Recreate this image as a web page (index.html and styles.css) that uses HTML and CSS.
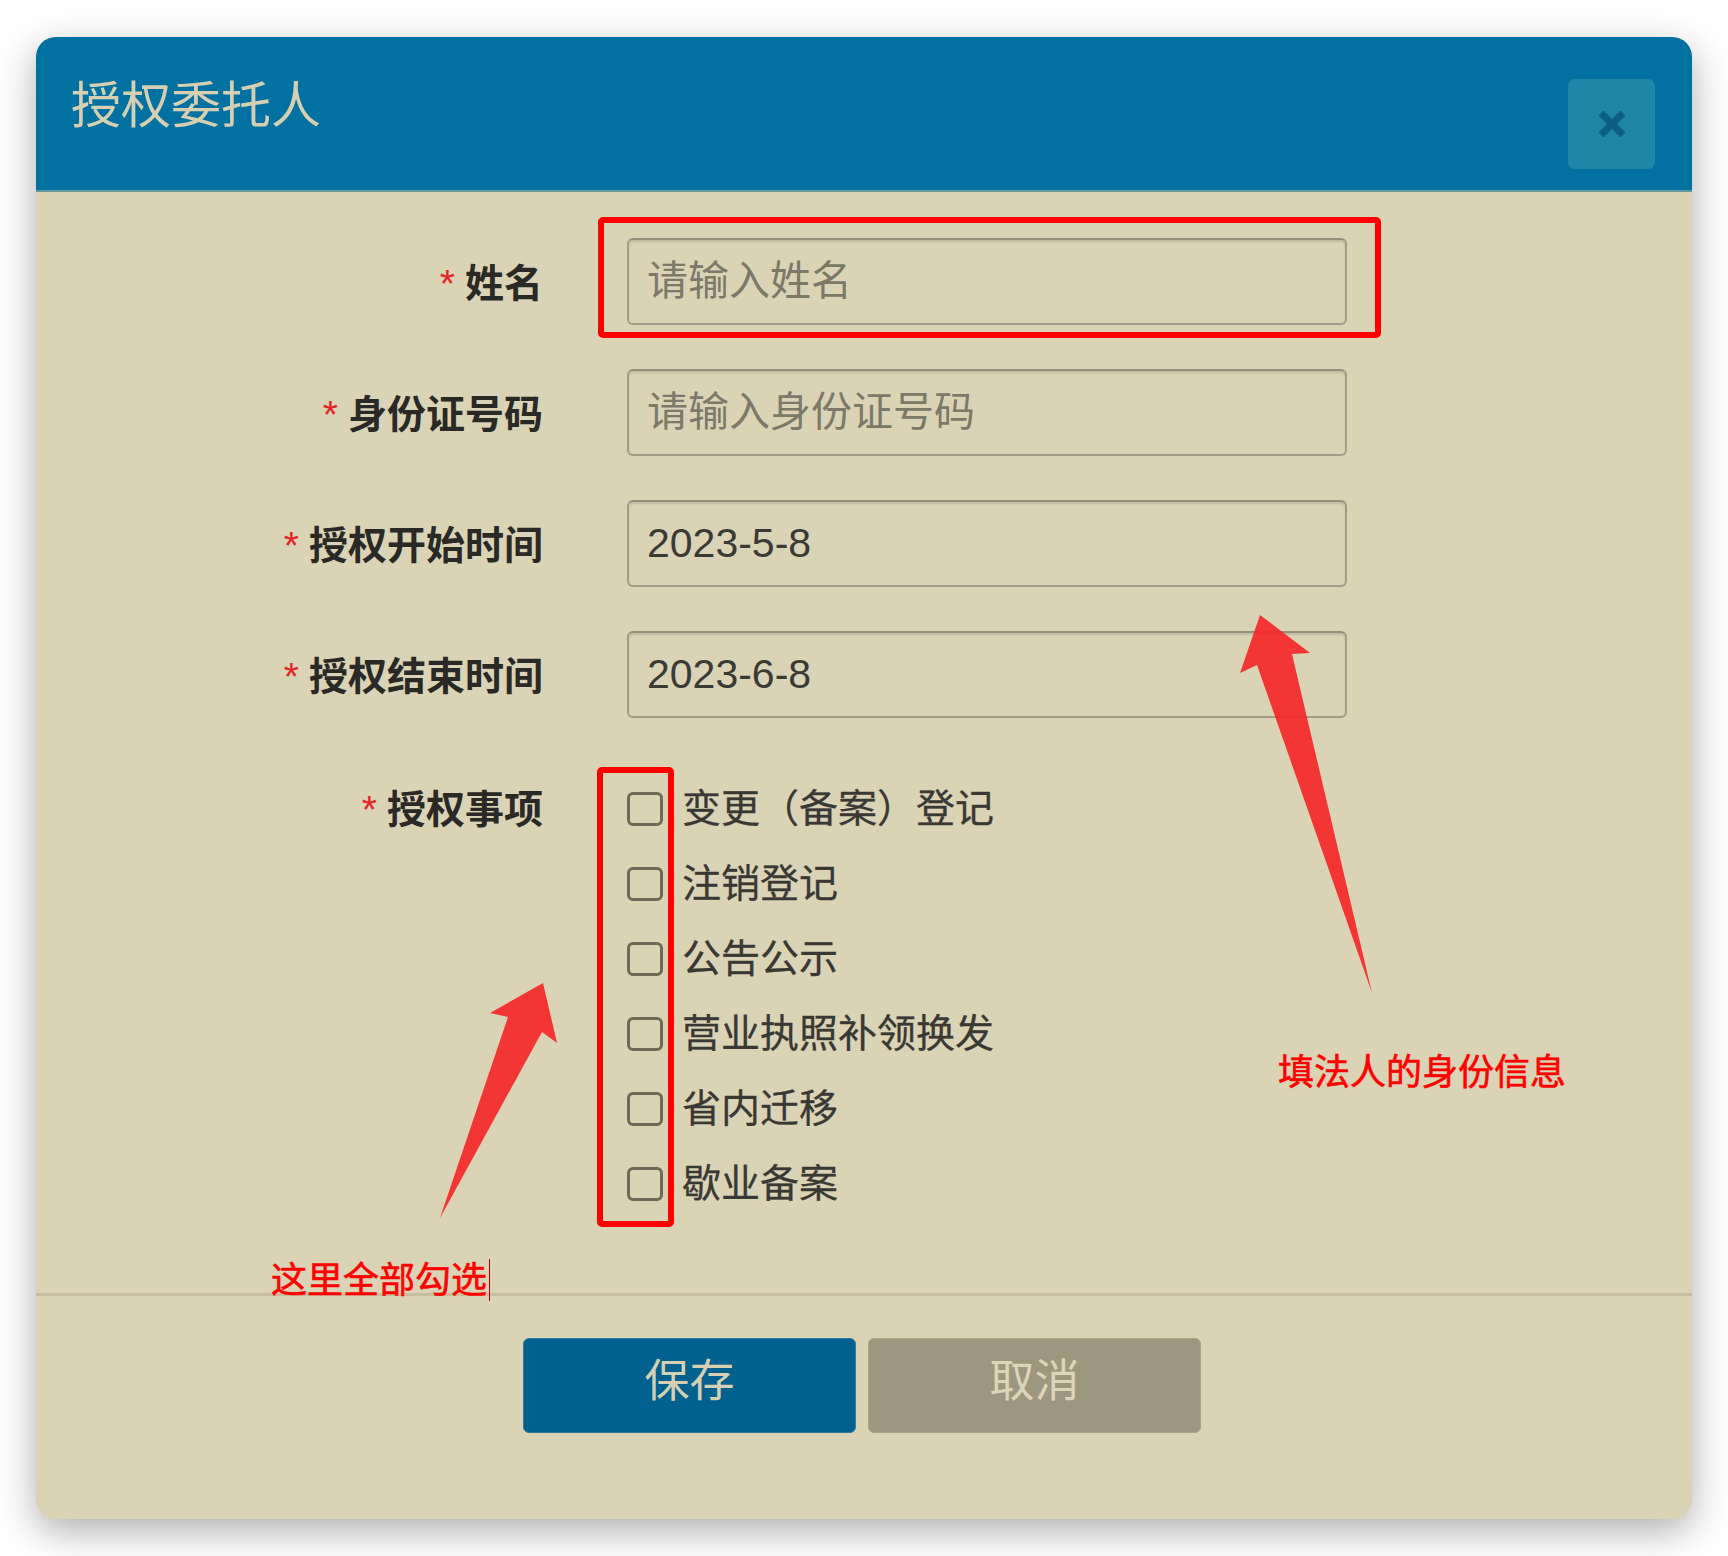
FILE: index.html
```html
<!DOCTYPE html>
<html lang="zh-CN">
<head>
<meta charset="utf-8">
<title>授权委托人</title>
<link rel="stylesheet" href="styles.css">
</head>
<body>
<div class="page">
  <div class="dialog">
    <div class="dialog-header">
      <h1 class="dialog-title">授权委托人</h1>
      <button class="close-btn" type="button" aria-label="关闭">
        <svg width="30" height="30" viewBox="0 0 30 30"><path d="M4 4 L26 26 M26 4 L4 26" stroke="#0b5d86" stroke-width="7" fill="none"/></svg>
      </button>
    </div>
    <form class="dialog-body">
      <div class="form-grid">
        <label class="field-label"><span class="req">*</span>姓名</label>
        <input class="field-input" type="text" placeholder="请输入姓名">

        <label class="field-label"><span class="req">*</span>身份证号码</label>
        <input class="field-input" type="text" placeholder="请输入身份证号码">

        <label class="field-label"><span class="req">*</span>授权开始时间</label>
        <input class="field-input" type="text" value="2023-5-8">

        <label class="field-label"><span class="req">*</span>授权结束时间</label>
        <input class="field-input" type="text" value="2023-6-8">

        <div class="field-label label-top"><span class="req">*</span>授权事项</div>
        <div class="check-list">
          <label class="check-item"><input class="check-box" type="checkbox"><span class="check-text">变更（备案）登记</span></label>
          <label class="check-item"><input class="check-box" type="checkbox"><span class="check-text">注销登记</span></label>
          <label class="check-item"><input class="check-box" type="checkbox"><span class="check-text">公告公示</span></label>
          <label class="check-item"><input class="check-box" type="checkbox"><span class="check-text">营业执照补领换发</span></label>
          <label class="check-item"><input class="check-box" type="checkbox"><span class="check-text">省内迁移</span></label>
          <label class="check-item"><input class="check-box" type="checkbox"><span class="check-text">歇业备案</span></label>
        </div>
      </div>
    </form>
    <div class="dialog-footer">
      <button class="btn btn-primary" type="button">保存</button>
      <button class="btn btn-cancel" type="button">取消</button>
    </div>
  </div>
</div>

<svg class="annot-layer" width="1728" height="1556" viewBox="0 0 1728 1556">
  <rect x="601" y="220" width="777" height="115" rx="2" fill="none" stroke="#ff0000" stroke-width="6"/>
  <rect x="600" y="770" width="71" height="454" rx="2" fill="none" stroke="#ff0000" stroke-width="6"/>
  <polygon class="arrow" points="1260,615 1310,653 1292,654 1372,993 1257,665 1240,673"/>
  <polygon class="arrow" points="543,983 557,1043 542,1032 440,1218 508,1017 490,1013"/>
</svg>
<div class="annot-text annot-right">填法人的身份信息</div>
<div class="annot-text annot-left">这里全部勾选<span class="caret"></span></div>
</body>
</html>
```

FILE: styles.css
```css
html, body {
  margin: 0;
  padding: 0;
}

body {
  width: 1728px;
  height: 1556px;
  background: #ffffff;
  position: relative;
  overflow: hidden;
  font-family: "Noto Sans CJK SC", "Liberation Sans", sans-serif;
}

.page {
  padding: 37px 36px 0 36px;
}

.dialog {
  width: 1656px;
  height: 1482px;
  border-radius: 20px;
  background: #dad3b6;
  box-shadow: 0 12px 38px rgba(0, 0, 0, 0.32);
  overflow: hidden;
  display: flex;
  flex-direction: column;
}

.dialog-header {
  height: 155px;
  box-sizing: border-box;
  background: #0071a1;
  border-bottom: 2px solid #6796a3;
  display: flex;
  justify-content: space-between;
  align-items: flex-start;
  padding: 0 37px 0 35px;
  flex: none;
}

.dialog-title {
  margin: 34px 0 0 0;
  font-size: 50px;
  line-height: 60px;
  font-weight: 400;
  color: #d7cfb1;
  font-family: "Noto Sans CJK SC", sans-serif;
}

.close-btn {
  margin-top: 42px;
  width: 87px;
  height: 90px;
  border: none;
  border-radius: 7px;
  background: #1f86a7;
  display: flex;
  align-items: center;
  justify-content: center;
  padding: 0;
}

.dialog-body {
  margin: 0;
  padding: 46px 0 72px 0;
  flex: none;
}

.form-grid {
  display: grid;
  grid-template-columns: 507px 720px;
  column-gap: 84px;
  row-gap: 44px;
}

.field-label {
  align-self: center;
  text-align: right;
  font-size: 39px;
  line-height: 50px;
  font-weight: 700;
  color: #2a2925;
  font-family: "Noto Sans CJK SC", sans-serif;
}

.req {
  font-family: "Liberation Sans", sans-serif;
  font-weight: 400;
  color: #e3262a;
  margin-right: 10px;
}

.label-top {
  align-self: start;
  margin-top: 7px;
  line-height: 75px;
}

.field-input {
  width: 720px;
  height: 87px;
  box-sizing: border-box;
  border: 2px solid #a29c88;
  border-top-color: #958f7b;
  border-radius: 6px;
  box-shadow: inset 0 2px 2px rgba(0, 0, 0, 0.12);
  background: transparent;
  padding: 0 18px;
  margin: 0;
  font-family: "Liberation Sans", "Noto Sans CJK SC", sans-serif;
  font-size: 41px;
  color: #3b3a35;
  outline: none;
}

.field-input::placeholder {
  color: #7d7969;
  opacity: 1;
}

.check-list {
  margin-top: 9px;
  display: flex;
  flex-direction: column;
}

.check-item {
  height: 75px;
  display: flex;
  align-items: center;
  font-size: 39px;
  color: #3a3833;
  font-family: "Noto Sans CJK SC", sans-serif;
}

.check-text {
  line-height: 50px;
  margin-bottom: 7px;
  -webkit-text-stroke: 0.3px #3a3833;
}

.check-box {
  appearance: none;
  -webkit-appearance: none;
  width: 36px;
  height: 34px;
  box-sizing: border-box;
  border: 3px solid #6e6958;
  border-radius: 6px;
  margin: 0 19px 0 0;
  background: transparent;
  flex: none;
}

.dialog-footer {
  border-top: 3px solid #c6be9f;
  padding: 42px 4px 0 0;
  display: flex;
  justify-content: center;
  gap: 12px;
}

.btn {
  width: 333px;
  height: 95px;
  box-sizing: border-box;
  border-radius: 6px;
  padding: 0 0 16px 0;
  font-family: "Noto Sans CJK SC", sans-serif;
  font-size: 45px;
  line-height: 60px;
  display: flex;
  align-items: center;
  justify-content: center;
}

.btn-primary {
  background: #00618f;
  border: 1px solid #2f7b9c;
  color: #d6cfb0;
}

.btn-cancel {
  background: #9e977f;
  border: 1px solid #aaa38b;
  color: #dcd5b9;
}

/* annotation overlay */
.annot-layer {
  position: absolute;
  left: 0;
  top: 0;
  pointer-events: none;
}

.arrow {
  fill: #f42a2a;
  fill-opacity: 0.93;
}

.annot-text {
  position: absolute;
  font-family: "Noto Sans CJK SC", sans-serif;
  font-size: 36px;
  line-height: 36px;
  color: #ff0000;
  -webkit-text-stroke: 0.6px #ff0000;
  white-space: nowrap;
}

.annot-right {
  left: 1278px;
  top: 1051px;
}

.annot-left {
  left: 271px;
  top: 1259px;
}

.caret {
  display: inline-block;
  width: 1px;
  height: 42px;
  background: #b00000;
  vertical-align: -8px;
  margin-left: 2px;
  -webkit-text-stroke: 0;
}
```
